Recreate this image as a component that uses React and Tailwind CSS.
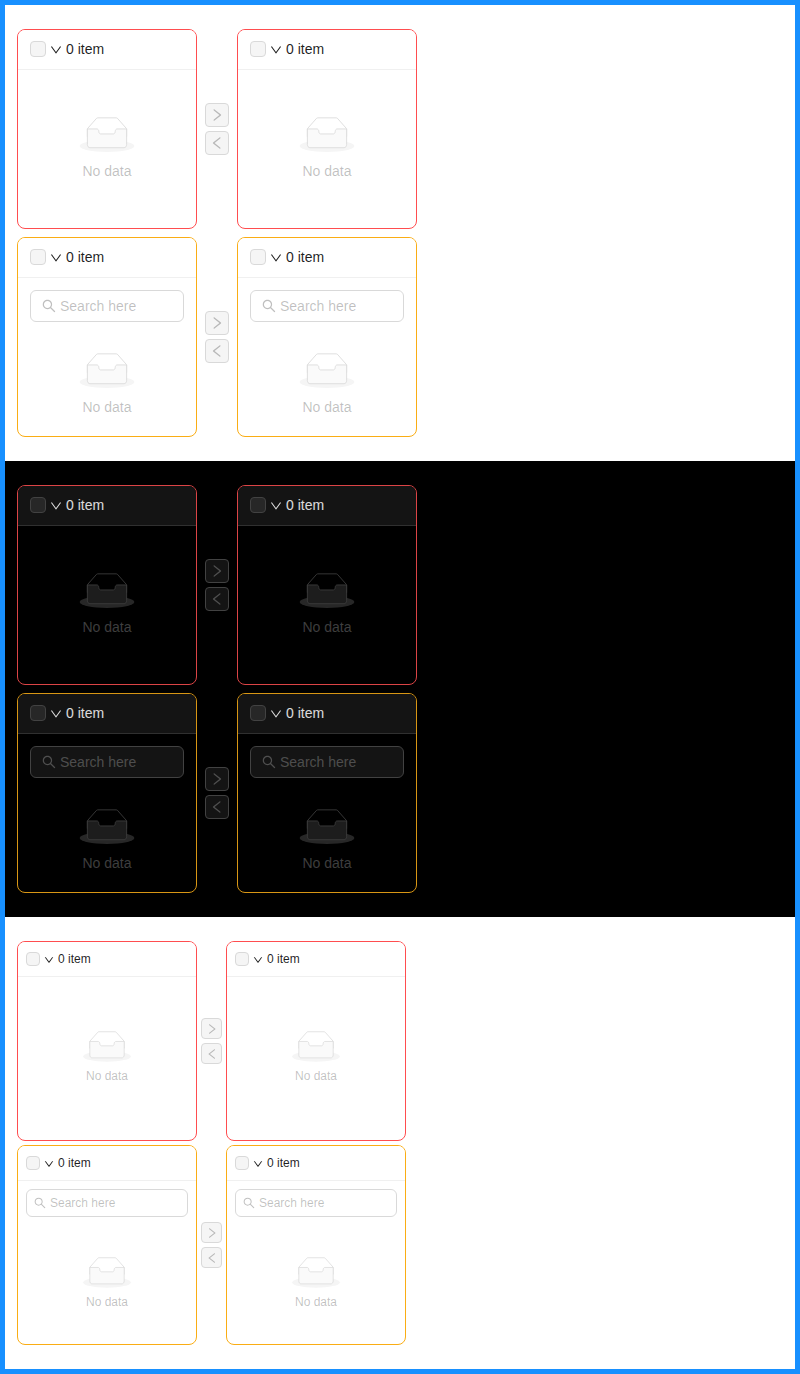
import React from "react";
import { AiOutlineDown, AiOutlineLeft, AiOutlineRight, AiOutlineSearch } from "react-icons/ai";
import clsx from "clsx";

// Trims the built-in margin around the icon glyphs.
const ICON_BOX = "64 64 896 896";

const light = {
  section: "bg-white",
  header: "bg-white border-[#f0f0f0] text-black/88",
  checkbox: "bg-[#f5f5f5] border-[#d9d9d9]",
  button: "bg-[#f5f5f5] border-[#d9d9d9] text-black/25",
  inputBox: "bg-white border-[#d9d9d9] text-black/25",
  muted: "text-black/25",
  error: "border-[#ff4d4f]",
  warning: "border-[#faad14]",
  art: { border: "#d9d9d9", shadow: "#f5f5f5", content: "#fafafa" },
};

const dark = {
  section: "bg-black",
  header: "bg-[#141414] border-[#303030] text-white/85",
  checkbox: "bg-[#272727] border-[#424242]",
  button: "bg-[#141414] border-[#424242] text-white/25",
  inputBox: "bg-[#141414] border-[#424242] text-white/25",
  muted: "text-white/25",
  error: "border-[#dc4446]",
  warning: "border-[#d89614]",
  art: { border: "#3e3e3e", shadow: "#272727", content: "#1d1d1d" },
};

function EmptyArt({ colors, compact }) {
  return (
    <svg viewBox="0 0 64 41" className={clsx("w-16", compact ? "h-[30.625px]" : "h-[35px]")}>
      <g transform="translate(0 1)" fill="none" fillRule="evenodd">
        <ellipse fill={colors.shadow} cx="32" cy="33" rx="32" ry="7" />
        <g fillRule="nonzero" stroke={colors.border}>
          <path d="M55 12.76L44.854 1.258C44.367.474 43.656 0 42.907 0H21.093c-.749 0-1.46.474-1.947 1.257L9 12.761V22h46v-9.24z" />
          <path
            d="M41.613 15.931c0-1.605.994-2.93 2.227-2.931H55v18.137C55 33.26 53.68 35 52.05 35h-40.1C10.32 35 9 33.259 9 31.137V13h11.16c1.233 0 2.227 1.323 2.227 2.928v.022c0 1.605 1.005 2.901 2.237 2.901h14.752c1.232 0 2.237-1.308 2.237-2.913v-.007z"
            fill={colors.content}
          />
        </g>
      </g>
    </svg>
  );
}

function Panel({ theme, compact, status, search }) {
  return (
    <div className={clsx("flex h-[200px] w-[180px] flex-col overflow-hidden rounded-lg border", theme[status])}>
      <div
        className={clsx(
          "flex shrink-0 items-center gap-1 border-b",
          compact ? "h-[35px] px-2" : "h-10 px-3 pb-px",
          theme.header
        )}
      >
        <span className={clsx("shrink-0 rounded border", compact ? "size-3.5" : "size-4", theme.checkbox)} />
        <AiOutlineDown
          viewBox={ICON_BOX}
          className={clsx("relative top-px shrink-0", compact ? "size-2.5" : "size-3")}
        />
        <span>0 item</span>
      </div>
      {search && (
        <div className={clsx("shrink-0", compact ? "p-2" : "p-3")}>
          <div
            className={clsx(
              "flex items-center gap-1 rounded-md border",
              compact ? "h-7 px-[7px]" : "h-8 px-[11px]",
              theme.inputBox
            )}
          >
            <AiOutlineSearch viewBox={ICON_BOX} className={clsx("shrink-0", compact ? "size-3" : "size-3.5")} />
            <span>Search here</span>
          </div>
        </div>
      )}
      <div
        className={clsx("flex flex-1 flex-col items-center justify-center", compact ? "gap-1" : "gap-2", theme.muted)}
      >
        <EmptyArt colors={theme.art} compact={compact} />
        <span>No data</span>
      </div>
    </div>
  );
}

function MoveButton({ theme, compact, icon: Icon }) {
  return (
    <button
      className={clsx(
        "flex items-center justify-center rounded border",
        compact ? "size-[21px]" : "size-6",
        theme.button
      )}
    >
      <Icon viewBox={ICON_BOX} className={clsx("shrink-0", compact ? "size-3" : "size-3.5")} />
    </button>
  );
}

function Transfer({ theme, compact, status, search }) {
  return (
    <div className={clsx("flex items-center", compact ? "gap-1" : "gap-2")}>
      <Panel theme={theme} compact={compact} status={status} search={search} />
      <div className="flex flex-col gap-1">
        <MoveButton theme={theme} compact={compact} icon={AiOutlineRight} />
        <MoveButton theme={theme} compact={compact} icon={AiOutlineLeft} />
      </div>
      <Panel theme={theme} compact={compact} status={status} search={search} />
    </div>
  );
}

function Section({ theme, compact }) {
  return (
    <section
      className={clsx(
        "flex flex-col px-3 py-6",
        compact ? "gap-1 text-[12px] leading-5" : "gap-2 text-[14px] leading-[22px]",
        theme.section
      )}
    >
      <Transfer theme={theme} compact={compact} status="error" />
      <Transfer theme={theme} compact={compact} status="warning" search />
    </section>
  );
}

export default function App() {
  return (
    <main className="w-[800px] border-[5px] border-[#1890ff] font-['Liberation_Sans',Arial,sans-serif]">
      <Section theme={light} />
      <Section theme={dark} />
      <Section theme={light} compact />
    </main>
  );
}
